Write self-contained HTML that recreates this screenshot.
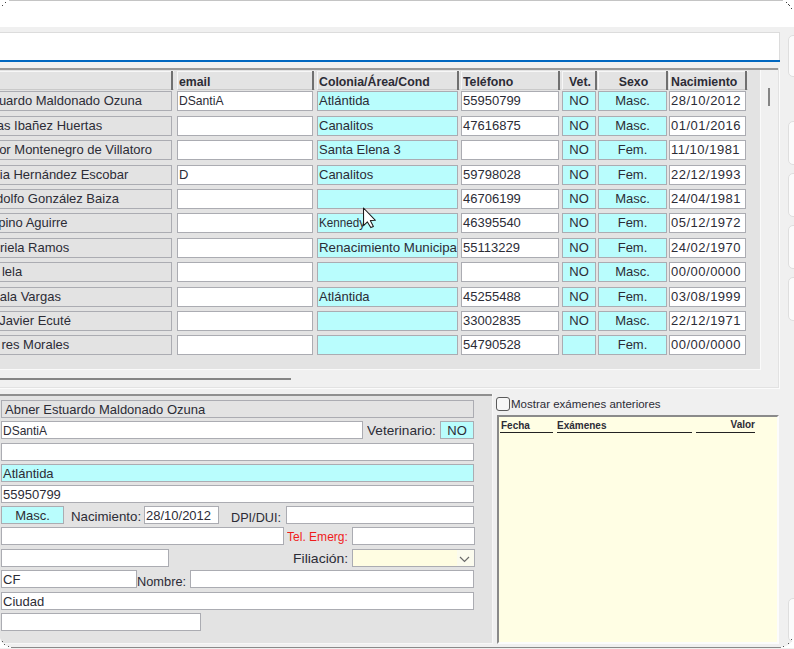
<!DOCTYPE html>
<html><head><meta charset="utf-8"><style>
html,body{margin:0;padding:0;}
body{width:794px;height:649px;position:relative;overflow:hidden;background:#f0f0f0;font-family:"Liberation Sans", sans-serif;}
body div{position:absolute;}
</style></head><body>
<div style="left:0px;top:0px;width:794px;height:27px;background:#fff;"></div>
<div style="left:9px;top:0px;width:774px;height:1px;background:#c4c4c4;"></div>
<div style="left:5px;top:2px;width:1px;height:1px;background:#444;"></div>
<div style="left:2px;top:5px;width:1px;height:1px;background:#444;"></div>
<div style="left:786px;top:2px;width:1px;height:1px;background:#444;"></div>
<div style="left:788px;top:4px;width:1px;height:1px;background:#444;"></div>
<div style="left:789px;top:5px;width:1px;height:1px;background:#444;"></div>
<div style="left:791px;top:8px;width:1px;height:1px;background:#444;"></div>
<div style="left:0px;top:32px;width:780px;height:30px;background:#fff;border-top:1px solid #dcdcdc;border-right:1px solid #dcdcdc;box-sizing:border-box;"></div>
<div style="left:0px;top:60px;width:780px;height:2px;background:#0067c0;"></div>
<div style="left:788px;top:35px;width:20px;height:42px;background:#fbfbfb;border:1px solid #dedede;border-radius:5px;box-sizing:border-box;"></div>
<div style="left:788px;top:121px;width:20px;height:44px;background:#fbfbfb;border:1px solid #dedede;border-radius:5px;box-sizing:border-box;"></div>
<div style="left:788px;top:173px;width:20px;height:44px;background:#fbfbfb;border:1px solid #dedede;border-radius:5px;box-sizing:border-box;"></div>
<div style="left:788px;top:225px;width:20px;height:44px;background:#fbfbfb;border:1px solid #dedede;border-radius:5px;box-sizing:border-box;"></div>
<div style="left:788px;top:277px;width:20px;height:44px;background:#fbfbfb;border:1px solid #dedede;border-radius:5px;box-sizing:border-box;"></div>
<div style="left:788px;top:598px;width:20px;height:44px;background:#fbfbfb;border:1px solid #dedede;border-radius:5px;box-sizing:border-box;"></div>
<div style="left:0px;top:68px;width:779px;height:320px;background:#f0f0f0;"></div>
<div style="left:0px;top:68px;width:778px;height:2px;background:#9a9a9a;"></div>
<div style="left:0px;top:70px;width:760px;height:299px;background:#e3e3e3;"></div>
<div style="left:0px;top:369px;width:760px;height:1px;background:#fafafa;"></div>
<div style="left:760px;top:70px;width:1px;height:300px;background:#fafafa;"></div>
<div style="left:0px;top:387px;width:779px;height:1px;background:#e2e2e2;"></div>
<div style="left:778px;top:68px;width:1px;height:320px;background:#e2e2e2;"></div>
<div style="left:779px;top:68px;width:1px;height:321px;background:#fbfbfb;"></div>
<div style="left:0px;top:388px;width:780px;height:1px;background:#fbfbfb;"></div>
<div style="left:768px;top:88px;width:2px;height:18px;background:#858585;"></div>
<div style="left:0px;top:378px;width:291px;height:2px;background:#858585;"></div>
<div style="left:-40px;top:71px;width:214px;height:19px;background:#e3e3e3;border-top:1px solid #f7f7f7;border-left:1px solid #f7f7f7;border-bottom:1px solid #c9c9c9;box-sizing:border-box;"></div>
<div style="left:171px;top:71px;width:2px;height:19px;background:#707070;"></div>
<div style="left:177px;top:71px;width:138px;height:19px;background:#e3e3e3;border-top:1px solid #f7f7f7;border-left:1px solid #f7f7f7;border-bottom:1px solid #c9c9c9;box-sizing:border-box;"></div>
<div style="left:312px;top:71px;width:2px;height:19px;background:#707070;"></div>
<div style="left:179px;top:74px;width:134px;height:17px;font-weight:bold;font-size:12.3px;line-height:17px;text-align:left;color:#2c2c36;white-space:nowrap;overflow:hidden;">email</div>
<div style="left:317px;top:71px;width:143px;height:19px;background:#e3e3e3;border-top:1px solid #f7f7f7;border-left:1px solid #f7f7f7;border-bottom:1px solid #c9c9c9;box-sizing:border-box;"></div>
<div style="left:457px;top:71px;width:2px;height:19px;background:#707070;"></div>
<div style="left:319px;top:74px;width:139px;height:17px;font-weight:bold;font-size:12.3px;line-height:17px;text-align:left;color:#2c2c36;white-space:nowrap;overflow:hidden;">Colonia/Área/Cond</div>
<div style="left:461px;top:71px;width:100px;height:19px;background:#e3e3e3;border-top:1px solid #f7f7f7;border-left:1px solid #f7f7f7;border-bottom:1px solid #c9c9c9;box-sizing:border-box;"></div>
<div style="left:558px;top:71px;width:2px;height:19px;background:#707070;"></div>
<div style="left:463px;top:74px;width:96px;height:17px;font-weight:bold;font-size:12.3px;line-height:17px;text-align:left;color:#2c2c36;white-space:nowrap;overflow:hidden;">Teléfono</div>
<div style="left:562px;top:71px;width:36px;height:19px;background:#e3e3e3;border-top:1px solid #f7f7f7;border-left:1px solid #f7f7f7;border-bottom:1px solid #c9c9c9;box-sizing:border-box;"></div>
<div style="left:595px;top:71px;width:2px;height:19px;background:#707070;"></div>
<div style="left:564px;top:74px;width:32px;height:17px;font-weight:bold;font-size:12.3px;line-height:17px;text-align:center;color:#2c2c36;white-space:nowrap;overflow:hidden;">Vet.</div>
<div style="left:598px;top:71px;width:71px;height:19px;background:#e3e3e3;border-top:1px solid #f7f7f7;border-left:1px solid #f7f7f7;border-bottom:1px solid #c9c9c9;box-sizing:border-box;"></div>
<div style="left:666px;top:71px;width:2px;height:19px;background:#707070;"></div>
<div style="left:600px;top:74px;width:67px;height:17px;font-weight:bold;font-size:12.3px;line-height:17px;text-align:center;color:#2c2c36;white-space:nowrap;overflow:hidden;">Sexo</div>
<div style="left:669px;top:71px;width:79px;height:19px;background:#e3e3e3;border-top:1px solid #f7f7f7;border-left:1px solid #f7f7f7;border-bottom:1px solid #c9c9c9;box-sizing:border-box;"></div>
<div style="left:745px;top:71px;width:2px;height:19px;background:#707070;"></div>
<div style="left:671px;top:74px;width:75px;height:17px;font-weight:bold;font-size:12.3px;line-height:17px;text-align:left;color:#2c2c36;white-space:nowrap;overflow:hidden;">Nacimiento</div>
<div style="left:-40px;top:91px;width:212px;height:20px;background:#e3e3e3;border:1px solid #abacb2;box-sizing:border-box;overflow:hidden;"><div style="left:-400px;top:0;width:581.0px;height:18px;line-height:18px;text-align:right;white-space:nowrap;font-size:13px;color:#2c2c36;">uardo Maldonado Ozuna</div></div>
<div style="left:177px;top:91px;width:136px;height:20px;background:#fff;border:1px solid #abacb2;box-sizing:border-box;overflow:hidden;"><div style="left:0;top:0;width:134px;height:18px;line-height:18px;text-align:left;white-space:nowrap;overflow:hidden;font-size:13px;color:#2c2c36;padding-left:1px;box-sizing:border-box;"><span style="display:inline-block;transform-origin:0 0;transform:scaleX(0.9329);">DSantiA</span></div></div>
<div style="left:317px;top:91px;width:141px;height:20px;background:#b9fdfd;border:1px solid #abacb2;box-sizing:border-box;overflow:hidden;"><div style="left:0;top:0;width:139px;height:18px;line-height:18px;text-align:left;white-space:nowrap;overflow:hidden;font-size:13px;color:#2c2c36;padding-left:1px;box-sizing:border-box;">Atlántida</div></div>
<div style="left:461px;top:91px;width:98px;height:20px;background:#fff;border:1px solid #abacb2;box-sizing:border-box;overflow:hidden;"><div style="left:0;top:0;width:96px;height:18px;line-height:18px;text-align:left;white-space:nowrap;overflow:hidden;font-size:13px;color:#2c2c36;padding-left:1px;box-sizing:border-box;">55950799</div></div>
<div style="left:562px;top:91px;width:34px;height:20px;background:#b9fdfd;border:1px solid #abacb2;box-sizing:border-box;overflow:hidden;"><div style="left:0;top:0;width:32px;height:18px;line-height:18px;text-align:center;white-space:nowrap;overflow:hidden;font-size:13px;color:#2c2c36;box-sizing:border-box;">NO</div></div>
<div style="left:598px;top:91px;width:69px;height:20px;background:#b9fdfd;border:1px solid #abacb2;box-sizing:border-box;overflow:hidden;"><div style="left:0;top:0;width:67px;height:18px;line-height:18px;text-align:center;white-space:nowrap;overflow:hidden;font-size:13px;color:#2c2c36;box-sizing:border-box;">Masc.</div></div>
<div style="left:669px;top:91px;width:77px;height:20px;background:#fff;border:1px solid #abacb2;box-sizing:border-box;overflow:hidden;"><div style="left:0;top:0;width:75px;height:18px;line-height:18px;text-align:left;white-space:nowrap;overflow:hidden;font-size:13px;color:#2c2c36;padding-left:1px;letter-spacing:0.5px;box-sizing:border-box;">28/10/2012</div></div>
<div style="left:-40px;top:116px;width:212px;height:20px;background:#e3e3e3;border:1px solid #abacb2;box-sizing:border-box;overflow:hidden;"><div style="left:-400px;top:0;width:541.2px;height:18px;line-height:18px;text-align:right;white-space:nowrap;font-size:13px;color:#2c2c36;">as Ibañez Huertas</div></div>
<div style="left:177px;top:116px;width:136px;height:20px;background:#fff;border:1px solid #abacb2;box-sizing:border-box;overflow:hidden;"></div>
<div style="left:317px;top:116px;width:141px;height:20px;background:#b9fdfd;border:1px solid #abacb2;box-sizing:border-box;overflow:hidden;"><div style="left:0;top:0;width:139px;height:18px;line-height:18px;text-align:left;white-space:nowrap;overflow:hidden;font-size:13px;color:#2c2c36;padding-left:1px;box-sizing:border-box;">Canalitos</div></div>
<div style="left:461px;top:116px;width:98px;height:20px;background:#fff;border:1px solid #abacb2;box-sizing:border-box;overflow:hidden;"><div style="left:0;top:0;width:96px;height:18px;line-height:18px;text-align:left;white-space:nowrap;overflow:hidden;font-size:13px;color:#2c2c36;padding-left:1px;box-sizing:border-box;">47616875</div></div>
<div style="left:562px;top:116px;width:34px;height:20px;background:#b9fdfd;border:1px solid #abacb2;box-sizing:border-box;overflow:hidden;"><div style="left:0;top:0;width:32px;height:18px;line-height:18px;text-align:center;white-space:nowrap;overflow:hidden;font-size:13px;color:#2c2c36;box-sizing:border-box;">NO</div></div>
<div style="left:598px;top:116px;width:69px;height:20px;background:#b9fdfd;border:1px solid #abacb2;box-sizing:border-box;overflow:hidden;"><div style="left:0;top:0;width:67px;height:18px;line-height:18px;text-align:center;white-space:nowrap;overflow:hidden;font-size:13px;color:#2c2c36;box-sizing:border-box;">Masc.</div></div>
<div style="left:669px;top:116px;width:77px;height:20px;background:#fff;border:1px solid #abacb2;box-sizing:border-box;overflow:hidden;"><div style="left:0;top:0;width:75px;height:18px;line-height:18px;text-align:left;white-space:nowrap;overflow:hidden;font-size:13px;color:#2c2c36;padding-left:1px;letter-spacing:0.5px;box-sizing:border-box;">01/01/2016</div></div>
<div style="left:-40px;top:140px;width:212px;height:20px;background:#e3e3e3;border:1px solid #abacb2;box-sizing:border-box;overflow:hidden;"><div style="left:-400px;top:0;width:591.1px;height:18px;line-height:18px;text-align:right;white-space:nowrap;font-size:13px;color:#2c2c36;">or Montenegro de Villatoro</div></div>
<div style="left:177px;top:140px;width:136px;height:20px;background:#fff;border:1px solid #abacb2;box-sizing:border-box;overflow:hidden;"></div>
<div style="left:317px;top:140px;width:141px;height:20px;background:#b9fdfd;border:1px solid #abacb2;box-sizing:border-box;overflow:hidden;"><div style="left:0;top:0;width:139px;height:18px;line-height:18px;text-align:left;white-space:nowrap;overflow:hidden;font-size:13px;color:#2c2c36;padding-left:1px;box-sizing:border-box;">Santa Elena 3</div></div>
<div style="left:461px;top:140px;width:98px;height:20px;background:#fff;border:1px solid #abacb2;box-sizing:border-box;overflow:hidden;"></div>
<div style="left:562px;top:140px;width:34px;height:20px;background:#b9fdfd;border:1px solid #abacb2;box-sizing:border-box;overflow:hidden;"><div style="left:0;top:0;width:32px;height:18px;line-height:18px;text-align:center;white-space:nowrap;overflow:hidden;font-size:13px;color:#2c2c36;box-sizing:border-box;">NO</div></div>
<div style="left:598px;top:140px;width:69px;height:20px;background:#b9fdfd;border:1px solid #abacb2;box-sizing:border-box;overflow:hidden;"><div style="left:0;top:0;width:67px;height:18px;line-height:18px;text-align:center;white-space:nowrap;overflow:hidden;font-size:13px;color:#2c2c36;box-sizing:border-box;">Fem.</div></div>
<div style="left:669px;top:140px;width:77px;height:20px;background:#fff;border:1px solid #abacb2;box-sizing:border-box;overflow:hidden;"><div style="left:0;top:0;width:75px;height:18px;line-height:18px;text-align:left;white-space:nowrap;overflow:hidden;font-size:13px;color:#2c2c36;padding-left:1px;letter-spacing:0.5px;box-sizing:border-box;">11/10/1981</div></div>
<div style="left:-40px;top:165px;width:212px;height:20px;background:#e3e3e3;border:1px solid #abacb2;box-sizing:border-box;overflow:hidden;"><div style="left:-400px;top:0;width:567.4px;height:18px;line-height:18px;text-align:right;white-space:nowrap;font-size:13px;color:#2c2c36;">cia Hernández Escobar</div></div>
<div style="left:177px;top:165px;width:136px;height:20px;background:#fff;border:1px solid #abacb2;box-sizing:border-box;overflow:hidden;"><div style="left:0;top:0;width:134px;height:18px;line-height:18px;text-align:left;white-space:nowrap;overflow:hidden;font-size:13px;color:#2c2c36;padding-left:1px;box-sizing:border-box;">D</div></div>
<div style="left:317px;top:165px;width:141px;height:20px;background:#b9fdfd;border:1px solid #abacb2;box-sizing:border-box;overflow:hidden;"><div style="left:0;top:0;width:139px;height:18px;line-height:18px;text-align:left;white-space:nowrap;overflow:hidden;font-size:13px;color:#2c2c36;padding-left:1px;box-sizing:border-box;">Canalitos</div></div>
<div style="left:461px;top:165px;width:98px;height:20px;background:#fff;border:1px solid #abacb2;box-sizing:border-box;overflow:hidden;"><div style="left:0;top:0;width:96px;height:18px;line-height:18px;text-align:left;white-space:nowrap;overflow:hidden;font-size:13px;color:#2c2c36;padding-left:1px;box-sizing:border-box;">59798028</div></div>
<div style="left:562px;top:165px;width:34px;height:20px;background:#b9fdfd;border:1px solid #abacb2;box-sizing:border-box;overflow:hidden;"><div style="left:0;top:0;width:32px;height:18px;line-height:18px;text-align:center;white-space:nowrap;overflow:hidden;font-size:13px;color:#2c2c36;box-sizing:border-box;">NO</div></div>
<div style="left:598px;top:165px;width:69px;height:20px;background:#b9fdfd;border:1px solid #abacb2;box-sizing:border-box;overflow:hidden;"><div style="left:0;top:0;width:67px;height:18px;line-height:18px;text-align:center;white-space:nowrap;overflow:hidden;font-size:13px;color:#2c2c36;box-sizing:border-box;">Fem.</div></div>
<div style="left:669px;top:165px;width:77px;height:20px;background:#fff;border:1px solid #abacb2;box-sizing:border-box;overflow:hidden;"><div style="left:0;top:0;width:75px;height:18px;line-height:18px;text-align:left;white-space:nowrap;overflow:hidden;font-size:13px;color:#2c2c36;padding-left:1px;letter-spacing:0.5px;box-sizing:border-box;">22/12/1993</div></div>
<div style="left:-40px;top:189px;width:212px;height:20px;background:#e3e3e3;border:1px solid #abacb2;box-sizing:border-box;overflow:hidden;"><div style="left:-400px;top:0;width:557.9px;height:18px;line-height:18px;text-align:right;white-space:nowrap;font-size:13px;color:#2c2c36;">dolfo González Baiza</div></div>
<div style="left:177px;top:189px;width:136px;height:20px;background:#fff;border:1px solid #abacb2;box-sizing:border-box;overflow:hidden;"></div>
<div style="left:317px;top:189px;width:141px;height:20px;background:#b9fdfd;border:1px solid #abacb2;box-sizing:border-box;overflow:hidden;"></div>
<div style="left:461px;top:189px;width:98px;height:20px;background:#fff;border:1px solid #abacb2;box-sizing:border-box;overflow:hidden;"><div style="left:0;top:0;width:96px;height:18px;line-height:18px;text-align:left;white-space:nowrap;overflow:hidden;font-size:13px;color:#2c2c36;padding-left:1px;box-sizing:border-box;">46706199</div></div>
<div style="left:562px;top:189px;width:34px;height:20px;background:#b9fdfd;border:1px solid #abacb2;box-sizing:border-box;overflow:hidden;"><div style="left:0;top:0;width:32px;height:18px;line-height:18px;text-align:center;white-space:nowrap;overflow:hidden;font-size:13px;color:#2c2c36;box-sizing:border-box;">NO</div></div>
<div style="left:598px;top:189px;width:69px;height:20px;background:#b9fdfd;border:1px solid #abacb2;box-sizing:border-box;overflow:hidden;"><div style="left:0;top:0;width:67px;height:18px;line-height:18px;text-align:center;white-space:nowrap;overflow:hidden;font-size:13px;color:#2c2c36;box-sizing:border-box;">Masc.</div></div>
<div style="left:669px;top:189px;width:77px;height:20px;background:#fff;border:1px solid #abacb2;box-sizing:border-box;overflow:hidden;"><div style="left:0;top:0;width:75px;height:18px;line-height:18px;text-align:left;white-space:nowrap;overflow:hidden;font-size:13px;color:#2c2c36;padding-left:1px;letter-spacing:0.5px;box-sizing:border-box;">24/04/1981</div></div>
<div style="left:-40px;top:213px;width:212px;height:20px;background:#e3e3e3;border:1px solid #abacb2;box-sizing:border-box;overflow:hidden;"><div style="left:-400px;top:0;width:506.6px;height:18px;line-height:18px;text-align:right;white-space:nowrap;font-size:13px;color:#2c2c36;">pino Aguirre</div></div>
<div style="left:177px;top:213px;width:136px;height:20px;background:#fff;border:1px solid #abacb2;box-sizing:border-box;overflow:hidden;"></div>
<div style="left:317px;top:213px;width:141px;height:20px;background:#b9fdfd;border:1px solid #abacb2;box-sizing:border-box;overflow:hidden;"><div style="left:0;top:0;width:139px;height:18px;line-height:18px;text-align:left;white-space:nowrap;overflow:hidden;font-size:13px;color:#2c2c36;padding-left:1px;box-sizing:border-box;"><span style="display:inline-block;transform-origin:0 0;transform:scaleX(0.8962);">Kennedy</span></div></div>
<div style="left:461px;top:213px;width:98px;height:20px;background:#fff;border:1px solid #abacb2;box-sizing:border-box;overflow:hidden;"><div style="left:0;top:0;width:96px;height:18px;line-height:18px;text-align:left;white-space:nowrap;overflow:hidden;font-size:13px;color:#2c2c36;padding-left:1px;box-sizing:border-box;">46395540</div></div>
<div style="left:562px;top:213px;width:34px;height:20px;background:#b9fdfd;border:1px solid #abacb2;box-sizing:border-box;overflow:hidden;"><div style="left:0;top:0;width:32px;height:18px;line-height:18px;text-align:center;white-space:nowrap;overflow:hidden;font-size:13px;color:#2c2c36;box-sizing:border-box;">NO</div></div>
<div style="left:598px;top:213px;width:69px;height:20px;background:#b9fdfd;border:1px solid #abacb2;box-sizing:border-box;overflow:hidden;"><div style="left:0;top:0;width:67px;height:18px;line-height:18px;text-align:center;white-space:nowrap;overflow:hidden;font-size:13px;color:#2c2c36;box-sizing:border-box;">Fem.</div></div>
<div style="left:669px;top:213px;width:77px;height:20px;background:#fff;border:1px solid #abacb2;box-sizing:border-box;overflow:hidden;"><div style="left:0;top:0;width:75px;height:18px;line-height:18px;text-align:left;white-space:nowrap;overflow:hidden;font-size:13px;color:#2c2c36;padding-left:1px;letter-spacing:0.5px;box-sizing:border-box;">05/12/1972</div></div>
<div style="left:-40px;top:238px;width:212px;height:20px;background:#e3e3e3;border:1px solid #abacb2;box-sizing:border-box;overflow:hidden;"><div style="left:-400px;top:0;width:508.3px;height:18px;line-height:18px;text-align:right;white-space:nowrap;font-size:13px;color:#2c2c36;">riela Ramos</div></div>
<div style="left:177px;top:238px;width:136px;height:20px;background:#fff;border:1px solid #abacb2;box-sizing:border-box;overflow:hidden;"></div>
<div style="left:317px;top:238px;width:141px;height:20px;background:#b9fdfd;border:1px solid #abacb2;box-sizing:border-box;overflow:hidden;"><div style="left:0;top:0;width:139px;height:18px;line-height:18px;text-align:left;white-space:nowrap;overflow:hidden;font-size:13px;color:#2c2c36;padding-left:1px;box-sizing:border-box;"><span style="display:inline-block;transform-origin:0 0;transform:scaleX(1.0213);">Renacimiento Municipa</span></div></div>
<div style="left:461px;top:238px;width:98px;height:20px;background:#fff;border:1px solid #abacb2;box-sizing:border-box;overflow:hidden;"><div style="left:0;top:0;width:96px;height:18px;line-height:18px;text-align:left;white-space:nowrap;overflow:hidden;font-size:13px;color:#2c2c36;padding-left:1px;box-sizing:border-box;">55113229</div></div>
<div style="left:562px;top:238px;width:34px;height:20px;background:#b9fdfd;border:1px solid #abacb2;box-sizing:border-box;overflow:hidden;"><div style="left:0;top:0;width:32px;height:18px;line-height:18px;text-align:center;white-space:nowrap;overflow:hidden;font-size:13px;color:#2c2c36;box-sizing:border-box;">NO</div></div>
<div style="left:598px;top:238px;width:69px;height:20px;background:#b9fdfd;border:1px solid #abacb2;box-sizing:border-box;overflow:hidden;"><div style="left:0;top:0;width:67px;height:18px;line-height:18px;text-align:center;white-space:nowrap;overflow:hidden;font-size:13px;color:#2c2c36;box-sizing:border-box;">Fem.</div></div>
<div style="left:669px;top:238px;width:77px;height:20px;background:#fff;border:1px solid #abacb2;box-sizing:border-box;overflow:hidden;"><div style="left:0;top:0;width:75px;height:18px;line-height:18px;text-align:left;white-space:nowrap;overflow:hidden;font-size:13px;color:#2c2c36;padding-left:1px;letter-spacing:0.5px;box-sizing:border-box;">24/02/1970</div></div>
<div style="left:-40px;top:262px;width:212px;height:20px;background:#e3e3e3;border:1px solid #abacb2;box-sizing:border-box;overflow:hidden;"><div style="left:-400px;top:0;width:461.2px;height:18px;line-height:18px;text-align:right;white-space:nowrap;font-size:13px;color:#2c2c36;">lela</div></div>
<div style="left:177px;top:262px;width:136px;height:20px;background:#fff;border:1px solid #abacb2;box-sizing:border-box;overflow:hidden;"></div>
<div style="left:317px;top:262px;width:141px;height:20px;background:#b9fdfd;border:1px solid #abacb2;box-sizing:border-box;overflow:hidden;"></div>
<div style="left:461px;top:262px;width:98px;height:20px;background:#fff;border:1px solid #abacb2;box-sizing:border-box;overflow:hidden;"></div>
<div style="left:562px;top:262px;width:34px;height:20px;background:#b9fdfd;border:1px solid #abacb2;box-sizing:border-box;overflow:hidden;"><div style="left:0;top:0;width:32px;height:18px;line-height:18px;text-align:center;white-space:nowrap;overflow:hidden;font-size:13px;color:#2c2c36;box-sizing:border-box;">NO</div></div>
<div style="left:598px;top:262px;width:69px;height:20px;background:#b9fdfd;border:1px solid #abacb2;box-sizing:border-box;overflow:hidden;"><div style="left:0;top:0;width:67px;height:18px;line-height:18px;text-align:center;white-space:nowrap;overflow:hidden;font-size:13px;color:#2c2c36;box-sizing:border-box;">Masc.</div></div>
<div style="left:669px;top:262px;width:77px;height:20px;background:#fff;border:1px solid #abacb2;box-sizing:border-box;overflow:hidden;"><div style="left:0;top:0;width:75px;height:18px;line-height:18px;text-align:left;white-space:nowrap;overflow:hidden;font-size:13px;color:#2c2c36;padding-left:1px;letter-spacing:0.5px;box-sizing:border-box;">00/00/0000</div></div>
<div style="left:-40px;top:287px;width:212px;height:20px;background:#e3e3e3;border:1px solid #abacb2;box-sizing:border-box;overflow:hidden;"><div style="left:-400px;top:0;width:499.9px;height:18px;line-height:18px;text-align:right;white-space:nowrap;font-size:13px;color:#2c2c36;">ala Vargas</div></div>
<div style="left:177px;top:287px;width:136px;height:20px;background:#fff;border:1px solid #abacb2;box-sizing:border-box;overflow:hidden;"></div>
<div style="left:317px;top:287px;width:141px;height:20px;background:#b9fdfd;border:1px solid #abacb2;box-sizing:border-box;overflow:hidden;"><div style="left:0;top:0;width:139px;height:18px;line-height:18px;text-align:left;white-space:nowrap;overflow:hidden;font-size:13px;color:#2c2c36;padding-left:1px;box-sizing:border-box;">Atlántida</div></div>
<div style="left:461px;top:287px;width:98px;height:20px;background:#fff;border:1px solid #abacb2;box-sizing:border-box;overflow:hidden;"><div style="left:0;top:0;width:96px;height:18px;line-height:18px;text-align:left;white-space:nowrap;overflow:hidden;font-size:13px;color:#2c2c36;padding-left:1px;box-sizing:border-box;">45255488</div></div>
<div style="left:562px;top:287px;width:34px;height:20px;background:#b9fdfd;border:1px solid #abacb2;box-sizing:border-box;overflow:hidden;"><div style="left:0;top:0;width:32px;height:18px;line-height:18px;text-align:center;white-space:nowrap;overflow:hidden;font-size:13px;color:#2c2c36;box-sizing:border-box;">NO</div></div>
<div style="left:598px;top:287px;width:69px;height:20px;background:#b9fdfd;border:1px solid #abacb2;box-sizing:border-box;overflow:hidden;"><div style="left:0;top:0;width:67px;height:18px;line-height:18px;text-align:center;white-space:nowrap;overflow:hidden;font-size:13px;color:#2c2c36;box-sizing:border-box;">Fem.</div></div>
<div style="left:669px;top:287px;width:77px;height:20px;background:#fff;border:1px solid #abacb2;box-sizing:border-box;overflow:hidden;"><div style="left:0;top:0;width:75px;height:18px;line-height:18px;text-align:left;white-space:nowrap;overflow:hidden;font-size:13px;color:#2c2c36;padding-left:1px;letter-spacing:0.5px;box-sizing:border-box;">03/08/1999</div></div>
<div style="left:-40px;top:311px;width:212px;height:20px;background:#e3e3e3;border:1px solid #abacb2;box-sizing:border-box;overflow:hidden;"><div style="left:-400px;top:0;width:509.9px;height:18px;line-height:18px;text-align:right;white-space:nowrap;font-size:13px;color:#2c2c36;"> Javier Ecuté</div></div>
<div style="left:177px;top:311px;width:136px;height:20px;background:#fff;border:1px solid #abacb2;box-sizing:border-box;overflow:hidden;"></div>
<div style="left:317px;top:311px;width:141px;height:20px;background:#b9fdfd;border:1px solid #abacb2;box-sizing:border-box;overflow:hidden;"></div>
<div style="left:461px;top:311px;width:98px;height:20px;background:#fff;border:1px solid #abacb2;box-sizing:border-box;overflow:hidden;"><div style="left:0;top:0;width:96px;height:18px;line-height:18px;text-align:left;white-space:nowrap;overflow:hidden;font-size:13px;color:#2c2c36;padding-left:1px;box-sizing:border-box;">33002835</div></div>
<div style="left:562px;top:311px;width:34px;height:20px;background:#b9fdfd;border:1px solid #abacb2;box-sizing:border-box;overflow:hidden;"><div style="left:0;top:0;width:32px;height:18px;line-height:18px;text-align:center;white-space:nowrap;overflow:hidden;font-size:13px;color:#2c2c36;box-sizing:border-box;">NO</div></div>
<div style="left:598px;top:311px;width:69px;height:20px;background:#b9fdfd;border:1px solid #abacb2;box-sizing:border-box;overflow:hidden;"><div style="left:0;top:0;width:67px;height:18px;line-height:18px;text-align:center;white-space:nowrap;overflow:hidden;font-size:13px;color:#2c2c36;box-sizing:border-box;">Masc.</div></div>
<div style="left:669px;top:311px;width:77px;height:20px;background:#fff;border:1px solid #abacb2;box-sizing:border-box;overflow:hidden;"><div style="left:0;top:0;width:75px;height:18px;line-height:18px;text-align:left;white-space:nowrap;overflow:hidden;font-size:13px;color:#2c2c36;padding-left:1px;letter-spacing:0.5px;box-sizing:border-box;">22/12/1971</div></div>
<div style="left:-40px;top:335px;width:212px;height:20px;background:#e3e3e3;border:1px solid #abacb2;box-sizing:border-box;overflow:hidden;"><div style="left:-400px;top:0;width:508.3px;height:18px;line-height:18px;text-align:right;white-space:nowrap;font-size:13px;color:#2c2c36;">res Morales</div></div>
<div style="left:177px;top:335px;width:136px;height:20px;background:#fff;border:1px solid #abacb2;box-sizing:border-box;overflow:hidden;"></div>
<div style="left:317px;top:335px;width:141px;height:20px;background:#b9fdfd;border:1px solid #abacb2;box-sizing:border-box;overflow:hidden;"></div>
<div style="left:461px;top:335px;width:98px;height:20px;background:#fff;border:1px solid #abacb2;box-sizing:border-box;overflow:hidden;"><div style="left:0;top:0;width:96px;height:18px;line-height:18px;text-align:left;white-space:nowrap;overflow:hidden;font-size:13px;color:#2c2c36;padding-left:1px;box-sizing:border-box;">54790528</div></div>
<div style="left:562px;top:335px;width:34px;height:20px;background:#b9fdfd;border:1px solid #abacb2;box-sizing:border-box;overflow:hidden;"></div>
<div style="left:598px;top:335px;width:69px;height:20px;background:#b9fdfd;border:1px solid #abacb2;box-sizing:border-box;overflow:hidden;"><div style="left:0;top:0;width:67px;height:18px;line-height:18px;text-align:center;white-space:nowrap;overflow:hidden;font-size:13px;color:#2c2c36;box-sizing:border-box;">Fem.</div></div>
<div style="left:669px;top:335px;width:77px;height:20px;background:#fff;border:1px solid #abacb2;box-sizing:border-box;overflow:hidden;"><div style="left:0;top:0;width:75px;height:18px;line-height:18px;text-align:left;white-space:nowrap;overflow:hidden;font-size:13px;color:#2c2c36;padding-left:1px;letter-spacing:0.5px;box-sizing:border-box;">00/00/0000</div></div>
<svg style="position:absolute;left:362px;top:207px" width="16" height="22" viewBox="0 0 16 22"><path d="M1.5 1 L1.6 18.6 L5.4 14.9 L8.8 20.6 L11.4 19.4 L8.3 13.6 L13.4 13.3 Z" fill="#fff" stroke="#1a1a1a" stroke-width="1.05" stroke-linejoin="round"/></svg>
<div style="left:0px;top:394px;width:492px;height:249px;background:#e3e3e3;"></div>
<div style="left:0px;top:394px;width:492px;height:2px;background:#8f8f8f;"></div>
<div style="left:492px;top:394px;width:1px;height:250px;background:#f7f7f7;"></div>
<div style="left:0px;top:643px;width:492px;height:1px;background:#f7f7f7;"></div>
<div style="left:1px;top:400px;width:473px;height:18px;background:#e3e3e3;border:1px solid #abacb2;box-sizing:border-box;overflow:hidden;"><div style="left:0;top:1px;width:471px;height:16px;line-height:16px;text-align:left;white-space:nowrap;overflow:hidden;font-size:13px;color:#2c2c36;padding-left:3px;box-sizing:border-box;">Abner Estuardo Maldonado Ozuna</div></div>
<div style="left:1px;top:421px;width:362px;height:18px;background:#fff;border:1px solid #abacb2;box-sizing:border-box;overflow:hidden;"><div style="left:0;top:1px;width:360px;height:16px;line-height:16px;text-align:left;white-space:nowrap;overflow:hidden;font-size:13px;color:#2c2c36;padding-left:1px;box-sizing:border-box;"><span style="display:inline-block;transform-origin:0 0;transform:scaleX(0.9224);">DSantiA</span></div></div>
<div style="left:367.40000000000003px;top:422px;height:18px;line-height:16px;padding-top:1px;white-space:nowrap;font-size:13px;color:#2c2c36;"><span style="display:inline-block;transform-origin:0 0;transform:scaleX(1.0477);">Veterinario:</span></div>
<div style="left:440px;top:421px;width:34px;height:18px;background:#b9fdfd;border:1px solid #abacb2;box-sizing:border-box;overflow:hidden;"><div style="left:0;top:1px;width:32px;height:16px;line-height:16px;text-align:center;white-space:nowrap;overflow:hidden;font-size:13px;color:#2c2c36;box-sizing:border-box;">NO</div></div>
<div style="left:1px;top:443px;width:473px;height:18px;background:#fff;border:1px solid #abacb2;box-sizing:border-box;overflow:hidden;"></div>
<div style="left:1px;top:464px;width:473px;height:18px;background:#b9fdfd;border:1px solid #abacb2;box-sizing:border-box;overflow:hidden;"><div style="left:0;top:1px;width:471px;height:16px;line-height:16px;text-align:left;white-space:nowrap;overflow:hidden;font-size:13px;color:#2c2c36;padding-left:1px;box-sizing:border-box;">Atlántida</div></div>
<div style="left:1px;top:485px;width:473px;height:18px;background:#fff;border:1px solid #abacb2;box-sizing:border-box;overflow:hidden;"><div style="left:0;top:1px;width:471px;height:16px;line-height:16px;text-align:left;white-space:nowrap;overflow:hidden;font-size:13px;color:#2c2c36;padding-left:1px;box-sizing:border-box;">55950799</div></div>
<div style="left:1px;top:506px;width:63px;height:18px;background:#b9fdfd;border:1px solid #abacb2;box-sizing:border-box;overflow:hidden;"><div style="left:0;top:1px;width:61px;height:16px;line-height:16px;text-align:center;white-space:nowrap;overflow:hidden;font-size:13px;color:#2c2c36;box-sizing:border-box;">Masc.</div></div>
<div style="left:70.69999999999999px;top:508px;height:18px;line-height:16px;padding-top:1px;white-space:nowrap;font-size:13px;color:#2c2c36;"><span style="display:inline-block;transform-origin:0 0;transform:scaleX(1.0213);">Nacimiento:</span></div>
<div style="left:144px;top:506px;width:75px;height:18px;background:#fff;border:1px solid #abacb2;box-sizing:border-box;overflow:hidden;"><div style="left:0;top:1px;width:73px;height:16px;line-height:16px;text-align:left;white-space:nowrap;overflow:hidden;font-size:13px;color:#2c2c36;padding-left:1px;box-sizing:border-box;">28/10/2012</div></div>
<div style="left:230.79999999999998px;top:508.5px;height:18px;line-height:16px;padding-top:1px;white-space:nowrap;font-size:13px;color:#2c2c36;"><span style="display:inline-block;transform-origin:0 0;transform:scaleX(0.9747);">DPI/DUI:</span></div>
<div style="left:286px;top:506px;width:188px;height:18px;background:#fff;border:1px solid #abacb2;box-sizing:border-box;overflow:hidden;"></div>
<div style="left:1px;top:527px;width:283px;height:18px;background:#fff;border:1px solid #abacb2;box-sizing:border-box;overflow:hidden;"></div>
<div style="left:286.90000000000003px;top:528px;height:18px;line-height:16px;padding-top:1px;white-space:nowrap;font-size:13px;color:#f01c1c;"><span style="display:inline-block;transform-origin:0 0;transform:scaleX(0.9262);">Tel. Emerg:</span></div>
<div style="left:352px;top:527px;width:123px;height:18px;background:#fff;border:1px solid #abacb2;box-sizing:border-box;overflow:hidden;"></div>
<div style="left:1px;top:549px;width:168px;height:18px;background:#fff;border:1px solid #abacb2;box-sizing:border-box;overflow:hidden;"></div>
<div style="left:292.6px;top:550px;height:18px;line-height:16px;padding-top:1px;white-space:nowrap;font-size:13px;color:#2c2c36;"><span style="display:inline-block;transform-origin:0 0;transform:scaleX(1.0761);">Filiación:</span></div>
<div style="left:352px;top:549px;width:123px;height:18px;background:#fffde2;border:1px solid #abacb2;box-sizing:border-box;"></div>
<div style="left:457px;top:550px;width:17px;height:16px;background:#fbfbee;"></div>
<svg style="position:absolute;left:459px;top:556px" width="11" height="7" viewBox="0 0 11 7"><path d="M1 1 L5.5 5.5 L10 1" fill="none" stroke="#6b6b6b" stroke-width="1.2"/></svg>
<div style="left:1px;top:570px;width:136px;height:18px;background:#fff;border:1px solid #abacb2;box-sizing:border-box;overflow:hidden;"><div style="left:0;top:1px;width:134px;height:16px;line-height:16px;text-align:left;white-space:nowrap;overflow:hidden;font-size:13px;color:#2c2c36;padding-left:1px;box-sizing:border-box;">CF</div></div>
<div style="left:137.4px;top:572.5px;height:18px;line-height:16px;padding-top:1px;white-space:nowrap;font-size:13px;color:#2c2c36;"><span style="display:inline-block;transform-origin:0 0;transform:scaleX(0.9848);">Nombre:</span></div>
<div style="left:190px;top:570px;width:284px;height:18px;background:#fff;border:1px solid #abacb2;box-sizing:border-box;overflow:hidden;"></div>
<div style="left:1px;top:592px;width:473px;height:18px;background:#fff;border:1px solid #abacb2;box-sizing:border-box;overflow:hidden;"><div style="left:0;top:1px;width:471px;height:16px;line-height:16px;text-align:left;white-space:nowrap;overflow:hidden;font-size:13px;color:#2c2c36;padding-left:1px;box-sizing:border-box;">Ciudad</div></div>
<div style="left:1px;top:613px;width:200px;height:18px;background:#fff;border:1px solid #abacb2;box-sizing:border-box;overflow:hidden;"></div>
<div style="left:496px;top:397px;width:14px;height:14px;background:#f7f7f7;border:1px solid #5a5a5a;border-radius:3px;box-sizing:border-box;"></div>
<div style="left:511px;top:396px;height:16px;line-height:16px;white-space:nowrap;font-size:11.5px;color:#2c2c36;">Mostrar exámenes anteriores</div>
<div style="left:497px;top:415px;width:282px;height:229px;background:#fffee4;border-top:2px solid #8a8a8a;border-left:2px solid #8a8a8a;border-right:2px solid #fcfcfc;border-bottom:2px solid #fcfcfc;box-sizing:border-box;"></div>
<div style="left:501px;top:420px;height:12px;line-height:12px;white-space:nowrap;font-size:10px;font-weight:bold;color:#2c2c36;">Fecha</div>
<div style="left:557px;top:420px;height:12px;line-height:12px;white-space:nowrap;font-size:10px;font-weight:bold;color:#2c2c36;">Exámenes</div>
<div style="left:655px;top:419px;width:100px;text-align:right;height:12px;line-height:12px;white-space:nowrap;font-size:10px;font-weight:bold;color:#2c2c36;">Valor</div>
<div style="left:500px;top:432px;width:53px;height:1px;background:#222;"></div>
<div style="left:557px;top:432px;width:135px;height:1px;background:#222;"></div>
<div style="left:696px;top:432px;width:59px;height:1px;background:#222;"></div>
<svg style="position:absolute;left:0;top:630px" width="14" height="19" viewBox="0 0 14 19"><path d="M0 8 Q1.5 15.5 11.5 17.5 L14 17.5 L14 19 L0 19 Z" fill="#fff"/></svg>
<svg style="position:absolute;left:778px;top:632px" width="16" height="17" viewBox="0 0 16 17"><path d="M16 5 Q14 13.5 3 15.5 L0 15.5 L0 17 L16 17 Z" fill="#fff"/></svg>
<div style="left:11px;top:647px;width:770px;height:1px;background:#8a8a8a;"></div>
<div style="left:0px;top:648px;width:794px;height:1px;background:#f0f0f0;"></div>
<div style="left:2px;top:641px;width:1px;height:1px;background:#555;"></div>
<div style="left:4px;top:644px;width:1px;height:1px;background:#555;"></div>
<div style="left:8px;top:646px;width:1px;height:1px;background:#555;"></div>
<div style="left:783px;top:646px;width:1px;height:1px;background:#555;"></div>
<div style="left:788px;top:643px;width:1px;height:1px;background:#555;"></div>
<div style="left:791px;top:639px;width:1px;height:1px;background:#555;"></div>
</body></html>
